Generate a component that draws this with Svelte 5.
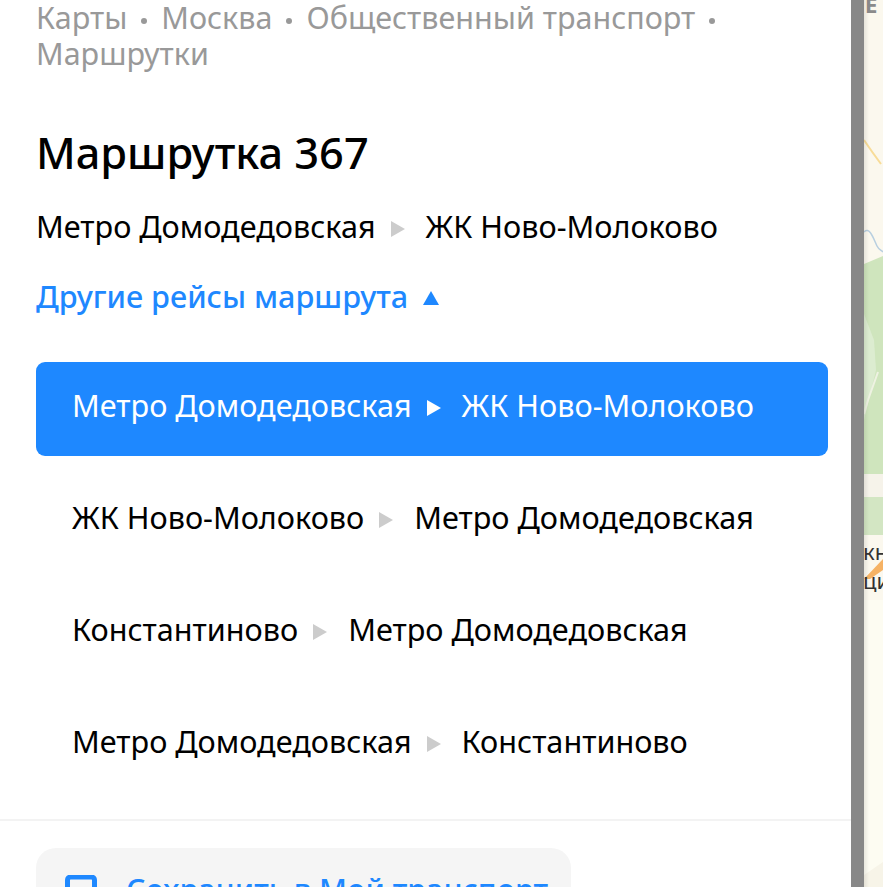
<script>
  const crumbs = ['Карты', 'Москва', 'Общественный транспорт', 'Маршрутки'];
  const trips = [
    ['Метро Домодедовская', 'ЖК Ново-Молоково'],
    ['ЖК Ново-Молоково', 'Метро Домодедовская'],
    ['Константиново', 'Метро Домодедовская'],
    ['Метро Домодедовская', 'Константиново']
  ];
</script>

<div class="page">
  <main class="panel">
    <nav class="crumbs">
      {#each crumbs as c, i}
        <span class="crumb">{c}{#if i < crumbs.length - 1}<i class="dot"></i>{/if}</span>
      {/each}
    </nav>
    <h1>Маршрутка 367</h1>
    <div class="route">
      <span>Метро Домодедовская</span><i class="arrow"></i><span>ЖК Ново-Молоково</span>
    </div>
    <button class="toggle">Другие рейсы маршрута<i class="up"></i></button>
    <ul class="trips">
      {#each trips as t, i}
        <li class:active={i === 0}>
          <span>{t[0]}</span><i class="arrow"></i><span>{t[1]}</span>
        </li>
      {/each}
    </ul>
    <div class="divider"></div>
    <button class="save">
      <svg width="32" height="40" viewBox="0 0 32 40"><path d="M2.500 37V5a3 3 0 0 1 3-3h21a3 3 0 0 1 3 3v32" fill="none" stroke="#1e88ff" stroke-width="5"/></svg>
      <span class="save-label">Сохранить в Мой транспорт</span>
    </button>
  </main>
  <div class="scrollbar"></div>
  <aside class="map">
    <svg width="19" height="887" viewBox="0 0 19 887">
      <defs>
        <linearGradient id="edge" x1="0" x2="1" y1="0" y2="0">
          <stop offset="0" stop-color="#000" stop-opacity="0.08"/>
          <stop offset="1" stop-color="#000" stop-opacity="0"/>
        </linearGradient>
      </defs>
      <rect width="19" height="887" fill="#fbf8ee"/>
      <rect y="600" width="19" height="287" fill="#fdfcf2"/>
      <path d="M0 140 Q8 152 17 164" fill="none" stroke="#f8dc98" stroke-width="2"/>
      <path d="M0 232 C6 226 10 240 13 246 C15 250 17 250 19 252" fill="none" stroke="#b8cfe0" stroke-width="1.500"/>
      <path d="M0 264 L19 256 V474 H0Z" fill="#cfe5bd"/>
      <path d="M0 474 H19 V497 H0Z" fill="#f6f3ea"/>
      <path d="M0 497 H19 V535 H0Z" fill="#d3e6c3"/>
      <path d="M0 314 L10 340 L12 370 L0 420Z" fill="#dcecd0"/>
      <path d="M14 372 L4 400 L0 414" fill="none" stroke="#eef2e2" stroke-width="2"/>
      <path d="M0 579 L19 559 V570 L6 579Z" fill="#f6b264"/>
      <text x="1" y="13" class="t1">Е</text>
      <text x="-1" y="560" class="t2">кн</text>
      <text x="-1" y="589" class="t2">ци</text>
      <path d="M0 875 L19 862 V887 H0Z" fill="#f7f4e8"/>
      <rect width="5" height="887" fill="url(#edge)"/>
    </svg>
  </aside>
</div>

<style>
  :global(body) {
    margin: 0;
    background: #fff;
  }
  .page {
    display: flex;
    width: 883px;
    height: 887px;
    overflow: hidden;
    font-family: "Noto Sans", "Liberation Sans", sans-serif;
  }
  .panel {
    width: 851px;
    flex: none;
    height: 887px;
    overflow: hidden;
    box-sizing: border-box;
    background: #fff;
  }
  .scrollbar {
    width: 13px;
    flex: none;
    background: #888;
  }
  .map {
    width: 19px;
    flex: none;
  }
  .map svg {
    display: block;
  }
  .t1 {
    font: 700 22px "Noto Sans", sans-serif;
    fill: #8a8a8a;
  }
  .t2 {
    font: 400 22px "Noto Sans", sans-serif;
    fill: #333;
  }
  .crumbs {
    padding: 0 36px;
    margin-top: -1px;
    width: 720px;
    font-size: 30.500px;
    line-height: 36px;
    color: #999;
  }
  .dot {
    display: inline-block;
    width: 6px;
    height: 6px;
    border-radius: 50%;
    background: #999;
    margin: 0 14px;
    vertical-align: middle;
  }
  h1 {
    margin: 55px 0 0 36px;
    font-size: 43.300px;
    line-height: 54px;
    font-weight: 500;
    color: #000;
  }
  .route,
  .trips li {
    display: flex;
    align-items: center;
    font-size: 30.600px;
    color: #000;
  }
  .route {
    margin: 26px 0 0 36px;
    line-height: 40px;
  }
  .arrow {
    width: 0;
    height: 0;
    border-left: 14px solid #ccc;
    border-top: 8px solid transparent;
    border-bottom: 8px solid transparent;
    margin: 6px 21px 0 15px;
  }
  .toggle {
    display: flex;
    align-items: center;
    margin: 30px 0 0 36px;
    padding: 0;
    border: 0;
    background: none;
    font: 500 30.600px/40px "Noto Sans", sans-serif;
    color: #1e88ff;
  }
  .up {
    width: 0;
    height: 0;
    border-bottom: 14px solid #1e88ff;
    border-left: 8px solid transparent;
    border-right: 8px solid transparent;
    margin: 4px 0 0 15px;
  }
  .trips {
    list-style: none;
    margin: 46px 23px 0 36px;
    padding: 0;
    display: flex;
    flex-direction: column;
    gap: 18px;
  }
  .trips li {
    height: 94px;
    box-sizing: border-box;
    padding: 0 0 8px 36px;
    border-radius: 9px;
  }
  .trips li.active {
    background: #1e88ff;
    color: #fff;
  }
  .trips li.active .arrow {
    border-left-color: #fff;
  }
  .divider {
    height: 2px;
    background: #f3f3f3;
    margin-top: 27px;
  }
  .save {
    display: flex;
    align-items: flex-start;
    gap: 29px;
    width: 535px;
    height: 90px;
    box-sizing: border-box;
    margin: 27px 0 0 36px;
    padding: 27px 0 0 29px;
    border: 0;
    border-radius: 20px;
    background: #f5f5f5;
    font: 500 30.500px/40px "Noto Sans", sans-serif;
    color: #1e88ff;
  }
  .save-label {
    margin-top: -6px;
  }
</style>
